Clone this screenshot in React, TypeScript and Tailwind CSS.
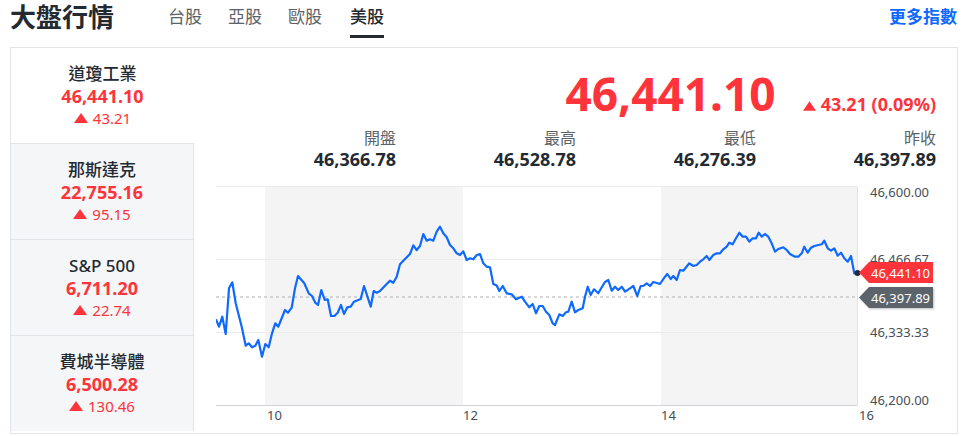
import React from 'react';

const FONT = { fontFamily: '"Noto Sans", "Noto Sans CJK TC", sans-serif' };

const RED = '#ff333a';

// index list on the left
const INDICES = [
  { name: '道瓊工業', price: '46,441.10', change: '43.21', active: true },
  { name: '那斯達克', price: '22,755.16', change: '95.15' },
  { name: 'S&P 500', price: '6,711.20', change: '22.74' },
  { name: '費城半導體', price: '6,500.28', change: '130.46' },
];

const STATS = [
  { label: '開盤', value: '46,366.78' },
  { label: '最高', value: '46,528.78' },
  { label: '最低', value: '46,276.39' },
  { label: '昨收', value: '46,397.89' },
];

const TABS = ['台股', '亞股', '歐股', '美股'];

// intraday points, in page coordinates (the svg viewBox matches them)
const POINTS: [number, number][] = [
  [216, 319.3], [219, 326.7], [222.3, 316.7], [225.7, 334], [229, 288.3], [232.3, 282.3],
  [235.7, 303.3], [241.7, 326.7], [245.7, 345.7], [248.7, 343.3], [252, 347.3], [255.3, 345.7],
  [258.3, 340], [262, 356.7], [265.3, 344], [268.7, 347.3], [272, 333.3], [275.3, 323.3],
  [278.3, 326.7], [285, 310], [288, 312.7], [291.7, 307.7], [295, 288.3], [298, 276],
  [304.3, 283.3], [308.7, 293.3], [312, 296], [315.3, 302.7], [318, 305], [321.3, 290],
  [324.7, 300], [327.7, 299.3], [331, 316], [334.3, 316], [337.7, 312.7], [341, 305],
  [344, 314], [347.3, 307.3], [350.7, 306.7], [354, 301.7], [360.7, 299], [364, 286],
  [370.7, 306.7], [373.7, 291], [376.7, 292.7], [380, 291], [386.7, 284], [390, 280.7],
  [393.3, 282.7], [396.7, 276.7], [400, 264.3], [403.3, 260.7], [410, 254], [413.3, 245.3],
  [416.7, 250], [420, 246], [423.3, 234], [426.7, 240.7], [430, 239.3], [433.3, 240.7],
  [436.7, 231.7], [440, 226.7], [443.3, 233.3], [446.7, 237.3], [450, 245], [453.3, 248.3],
  [456.7, 253.3], [460, 255], [463.3, 251.3], [466.7, 260], [470, 258.3], [473.3, 259.3],
  [476.7, 255], [480, 254], [483.3, 263.3], [486.7, 266.7], [490, 267.3], [493.3, 284],
  [496.7, 285.5], [499.3, 291], [502.7, 286], [506.7, 293.3], [511.7, 294.3], [516, 299.3],
  [521.7, 296.7], [525, 301.7], [529.3, 307.3], [532.7, 304], [536, 313.3], [539.3, 306],
  [542.7, 306], [546, 311.7], [549.3, 315], [552.7, 323.3], [555, 325], [559.3, 314.3],
  [562.7, 316], [566, 312.3], [568.3, 311.7], [571.7, 301.7], [575, 312.3], [578.3, 310],
  [582.7, 308.3], [585, 296.7], [587.7, 286.7], [590.7, 295], [594, 289.3], [598.3, 293.3],
  [601.7, 287.3], [605, 282], [608.3, 280], [611.7, 290.7], [615, 286.7], [618.3, 290],
  [621.7, 286.7], [625, 291.7], [630, 288.3], [633.3, 286], [637.3, 296], [640.7, 286],
  [643.3, 286], [646.7, 283.3], [650, 286], [653.3, 282], [660, 284], [665, 276.7],
  [667.3, 274], [670.7, 279], [673.3, 276], [676.7, 280], [680, 270], [683.3, 270.7],
  [689.3, 263.3], [693.3, 266], [696.7, 265], [700, 261.7], [703.3, 259.3], [706.7, 256],
  [709.3, 260], [713.3, 255], [716.7, 253.3], [720, 253.3], [723.3, 249.3], [726.7, 246.7],
  [729.3, 242.7], [732.7, 244.3], [736, 238.3], [739.3, 232.7], [742.7, 236.7], [746, 236.7],
  [749.3, 241.7], [752.7, 238.3], [756, 238.3], [758.7, 232.7], [761.7, 236.7], [765, 234],
  [768.3, 236.7], [771.7, 243.3], [775, 251.7], [778.3, 249], [783.3, 247.3], [786.7, 250],
  [790, 254], [795, 256.7], [798.3, 256.7], [801.7, 253.3], [804.3, 246.7], [807.7, 252.7],
  [811, 247.7], [814.3, 246], [821.7, 244.3], [824.3, 240.7], [827.7, 248.3], [831, 250.7],
  [834.3, 248.3], [837.7, 255.7], [841, 252.7], [844.3, 258.3], [847.7, 261.7], [851, 256],
  [854.3, 273.3], [857.5, 273],
];

const Triangle = ({ w = 14, h = 10 }: { w?: number; h?: number }) => (
  <svg width={w} height={h} viewBox="0 0 14 10" className="shrink-0">
    <polygon points="7,0 14,10 0,10" fill={RED} />
  </svg>
);

function Chart() {
  const line = POINTS.map(([x, y]) => `${x},${y}`).join(' ');
  const yLabels = [
    { t: '46,600.00', y: 192 },
    { t: '46,466.67', y: 259 },
    { t: '46,333.33', y: 332.5 },
    { t: '46,200.00', y: 400 },
  ];
  return (
    <svg width={741} height={253} viewBox="216 180 741 253" className="block" style={FONT}>
      <defs>
        <filter id="tagShadow" x="-10%" y="-20%" width="130%" height="160%">
          <feDropShadow dx="1" dy="1" stdDeviation="1" floodColor="#000" floodOpacity="0.25" />
        </filter>
      </defs>
      <rect x={265} y={186} width={198} height={219} fill="#f4f4f5" />
      <rect x={661} y={186} width={196.5} height={219} fill="#f4f4f5" />
      {[186, 259, 332].map((y) => (
        <line key={y} x1={216} x2={857.5} y1={y + 0.5} y2={y + 0.5} stroke="#ebebeb" strokeWidth={1} />
      ))}
      <line x1={857.5} x2={857.5} y1={186} y2={405} stroke="#e3e3e6" strokeWidth={1} />
      <line x1={216} x2={857.5} y1={405.5} y2={405.5} stroke="#cfd2d6" strokeWidth={1} />
      <line x1={216} x2={857} y1={297} y2={297} stroke="#b0b0b0" strokeWidth={1} strokeDasharray="3 3" />
      <polyline points={line} fill="none" stroke="#0f69ff" strokeWidth={2.2} strokeLinejoin="round" />
      <circle cx={857.5} cy={273} r={3} fill="#232a31" />
      {yLabels.map((l) => (
        <text key={l.t} x={870} y={l.y + 4.5} fontSize={13} fill="#464e56">
          {l.t}
        </text>
      ))}
      {[
        { t: '10', x: 267 },
        { t: '12', x: 463 },
        { t: '14', x: 661 },
        { t: '16', x: 859 },
      ].map((l) => (
        <text key={l.t} x={l.x} y={420} fontSize={13} fill="#464e56">
          {l.t}
        </text>
      ))}
      <polygon points="859,272.5 869,262 933,262 933,283 869,283" fill={RED} />
      <text x={871} y={277.5} fontSize={13} fill="#fff">
        46,441.10
      </text>
      <polygon points="859,297.5 869,287 933,287 933,308 869,308" fill="#5b636a" filter="url(#tagShadow)" />
      <text x={871} y={302.5} fontSize={13} fill="#fff">
        46,397.89
      </text>
    </svg>
  );
}

export default function App() {
  return (
    <div className="w-[964px] h-[436px] bg-white overflow-hidden" style={FONT}>
      <div className="ml-[10px] w-[948px]">
        {/* header */}
        <div className="h-[47px] flex items-start">
          <div className="text-[26px] leading-[34px] font-bold text-[#232a31]">大盤行情</div>
          <div className="ml-[54px] flex gap-[26px]">
            {TABS.map((t, i) => {
              const active = t === '美股';
              return (
                <div key={t} className={`flex flex-col ${i === 3 ? 'ml-[2px]' : ''}`}>
                  <span
                    className={`text-[17px] leading-[34px] ${active ? 'text-[#232a31] font-medium' : 'text-[#5b636a]'}`}
                  >
                    {t}
                  </span>
                  {active && <span className="mt-[1px] h-[3px] bg-[#232a31]" />}
                </div>
              );
            })}
          </div>
          <div className="ml-auto mr-[1px] text-[17px] leading-[34px] font-bold text-[#0f69ff]">更多指數</div>
        </div>

        {/* card */}
        <div className="flex border border-[#e2e4e8] h-[387px]">
          <div className="w-[183px] flex flex-col">
            {INDICES.map((it, i) => (
              <div
                key={it.name}
                className={`flex flex-col items-center justify-center ${
                  i === 0 ? 'h-[95px] bg-white' : 'h-[96px] bg-[#f5f6f8] border-t border-r border-[#e2e4e8]'
                }`}
              >
                <div className="text-[17px] leading-[22px] text-[#232a31] font-medium">{it.name}</div>
                <div className="text-[18px] leading-[23px] font-bold" style={{ color: RED }}>
                  {it.price}
                </div>
                <div className="flex items-center gap-[5px] text-[15px] leading-[20px]" style={{ color: RED }}>
                  <Triangle />
                  <span>{it.change}</span>
                </div>
              </div>
            ))}
          </div>

          <div className="flex-1 pl-[22px] pt-[15px]">
            <div className="pr-[21px]">
              <div className="h-[60px] flex items-baseline justify-end gap-[27px]" style={{ color: RED }}>
                <span className="text-[46px] leading-[60px] font-bold">46,441.10</span>
                <span className="flex items-baseline gap-[5px] text-[18px] font-bold">
                  <Triangle w={13} h={10} />
                  <span>43.21 (0.09%)</span>
                </span>
              </div>
              <div className="mt-[4px] grid grid-cols-4">
                {STATS.map((s) => (
                  <div key={s.label} className="text-right">
                    <div className="text-[16px] leading-[22px] text-[#5b636a]">{s.label}</div>
                    <div className="text-[18px] leading-[20px] font-bold text-[#232a31]">{s.value}</div>
                  </div>
                ))}
              </div>
            </div>
            <div className="mt-[11px]">
              <Chart />
            </div>
          </div>
        </div>
      </div>
    </div>
  );
}
